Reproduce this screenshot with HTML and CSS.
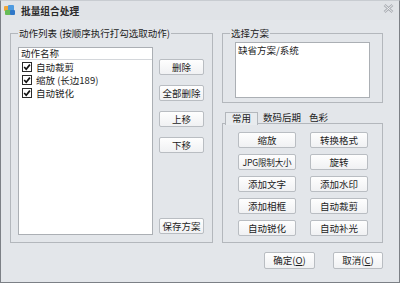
FILE: index.html
```html
<!DOCTYPE html>
<html lang="zh-CN">
<head>
  <meta charset="UTF-8" />
  <title>批量组合处理</title>
  <link rel="stylesheet" href="styles.css">
</head>
<body>
  <div class="window">
    <div class="titlebar">
      <svg class="app-icon" width="11" height="11" viewBox="0 0 11 11">
        <rect x="0" y="1" width="5" height="5" rx="1" fill="#f0a63a"/>
        <rect x="4" y="0" width="6" height="6" rx="1" fill="#4f9be0"/>
        <rect x="1" y="5" width="6" height="5" rx="1" fill="#66bb55"/>
        <rect x="6" y="5" width="5" height="5" rx="1" fill="#2f77c8"/>
      </svg>
      <span class="title">批量组合处理</span>
      <svg class="close" width="11" height="9" viewBox="0 0 11 9">
        <path d="M1.5 1 L9.5 8 M9.5 1 L1.5 8" stroke="#a9adb3" stroke-width="2.6" fill="none"/>
        <path d="M1.5 1 L9.5 8 M9.5 1 L1.5 8" stroke="#f3f4f6" stroke-width="0.9" fill="none"/>
      </svg>
    </div>

    <div class="client">
      <div class="columns">
        <fieldset class="group actions">
          <legend>动作列表 (按顺序执行打勾选取动作)</legend>
          <div class="list action-list">
            <div class="list-head">动作名称</div>
            <div class="row">
              <svg class="cb" width="10" height="10" viewBox="0 0 10 10"><rect x="0.5" y="0.5" width="9" height="9" fill="#fff" stroke="#2a2a2a"/><path d="M2.2 5 L4.2 7.2 L7.9 2.6" stroke="#111" stroke-width="1.7" fill="none"/></svg>
              <span>自动裁剪</span>
            </div>
            <div class="row">
              <svg class="cb" width="10" height="10" viewBox="0 0 10 10"><rect x="0.5" y="0.5" width="9" height="9" fill="#fff" stroke="#2a2a2a"/><path d="M2.2 5 L4.2 7.2 L7.9 2.6" stroke="#111" stroke-width="1.7" fill="none"/></svg>
              <span>缩放 (长边189)</span>
            </div>
            <div class="row">
              <svg class="cb" width="10" height="10" viewBox="0 0 10 10"><rect x="0.5" y="0.5" width="9" height="9" fill="#fff" stroke="#2a2a2a"/><path d="M2.2 5 L4.2 7.2 L7.9 2.6" stroke="#111" stroke-width="1.7" fill="none"/></svg>
              <span>自动锐化</span>
            </div>
          </div>
          <div class="side-buttons">
            <button class="btn">删除</button>
            <button class="btn">全部删除</button>
            <button class="btn">上移</button>
            <button class="btn">下移</button>
            <button class="btn save">保存方案</button>
          </div>
        </fieldset>

        <div class="right">
          <fieldset class="group scheme">
            <legend>选择方案</legend>
            <div class="list scheme-list">缺省方案/系统</div>
          </fieldset>

          <div class="tabs">
            <div class="tab-strip">
              <span class="tab active">常用</span>
              <span class="tab">数码后期</span>
              <span class="tab">色彩</span>
            </div>
            <div class="tab-panel">
              <button class="btn">缩放</button>
              <button class="btn">转换格式</button>
              <button class="btn narrow">JPG限制大小</button>
              <button class="btn">旋转</button>
              <button class="btn">添加文字</button>
              <button class="btn">添加水印</button>
              <button class="btn">添加相框</button>
              <button class="btn">自动裁剪</button>
              <button class="btn">自动锐化</button>
              <button class="btn">自动补光</button>
            </div>
          </div>
        </div>
      </div>

      <div class="footer">
        <button class="btn dlg">确定(<u>O</u>)</button>
        <button class="btn dlg">取消(<u>C</u>)</button>
      </div>
    </div>
  </div>
</body>
</html>
```

FILE: styles.css
```css
body {
  margin: 0;
  background: #e3e6ea;
  font-family: "Noto Sans CJK SC", "Noto Sans", sans-serif;
  font-size: 9.5px;
  color: #1c1c1c;
}
.window {
  box-sizing: border-box;
  width: 400px;
  height: 283px;
  border: 1px solid #7c8086;
  border-top-color: #c8ccd1;
  background: #e3e6ea;
  display: flex;
  flex-direction: column;
}
.titlebar {
  height: 19px;
  display: flex;
  align-items: center;
  padding: 0 3px 0 3px;
  background: #e0e3e7;
}
.app-icon {
  margin-right: 6px;
}
.title {
  font-weight: bold;
  font-size: 9.7px;
  color: #2a2a2a;
  flex: 1;
}
.close {
  margin-right: 2px;
  margin-top: -4px;
}
.client {
  flex: 1;
  padding: 6px 16px 0 9px;
}
.columns {
  display: flex;
  gap: 9px;
}
.group {
  margin: 0;
  border: 1px solid #b3b7bc;
  min-width: 0;
}
.group legend {
  line-height: 14px;
  padding: 0 1px;
}
.actions {
  width: 203px;
  box-sizing: border-box;
  height: 217px;
  padding: 7px 8px 8px 7px;
  display: flex;
  gap: 6px;
}
.list {
  box-sizing: border-box;
  background: #fff;
  border: 1px solid #abafb4;
}
.action-list {
  width: 135px;
  height: 188px;
}
.list-head {
  height: 11px;
  line-height: 11px;
  padding-left: 2px;
  border-bottom: 1px solid #d4d7db;
}
.row {
  height: 13px;
  display: flex;
  align-items: center;
  gap: 4px;
  padding-left: 3px;
}
.side-buttons {
  width: 45px;
  display: flex;
  flex-direction: column;
  gap: 10px;
  padding-top: 12px;
}
.btn {
  box-sizing: border-box;
  height: 16px;
  padding: 0;
  border: 1px solid #b9bdc2;
  border-radius: 2px;
  background: linear-gradient(#fefefe, #f0f1f3);
  font-family: inherit;
  font-size: 9.5px;
  color: #1c1c1c;
  line-height: 14px;
  white-space: nowrap;
  overflow: hidden;
}
.btn.narrow {
  font-size: 8.6px;
  letter-spacing: -0.2px;
}
.side-buttons .save {
  margin-top: auto;
}
.right {
  width: 161px;
  display: flex;
  flex-direction: column;
}
.scheme {
  padding: 2px 12px 4px 7px;
}
.scheme-list {
  margin-left: 5px;
  height: 56px;
  padding: 1px 2px;
  line-height: 12px;
}
.tabs {
  margin-top: 9px;
}
.tab-strip {
  display: flex;
  padding-left: 3px;
  height: 11px;
}
.tab {
  line-height: 11px;
  padding: 0 4px;
}
.tab.active {
  padding: 0 6px;
  border: 1px solid #b3b7bc;
  border-bottom: none;
  background: #e8ebee;
  height: 12px;
  margin-right: 1px;
  position: relative;
  z-index: 1;
}
.tab-panel {
  box-sizing: border-box;
  height: 120px;
  border: 1px solid #b3b7bc;
  padding: 8px 0 0 15px;
  display: grid;
  grid-template-columns: 58px 58px;
  grid-auto-rows: 16px;
  column-gap: 14px;
  row-gap: 6px;
}
.footer {
  display: flex;
  justify-content: flex-end;
  gap: 18px;
  margin-top: 9px;
}
.btn.dlg {
  height: 17px;
  width: 51px;
  line-height: 15px;
}
.btn.dlg:last-child {
  width: 50px;
}
```
